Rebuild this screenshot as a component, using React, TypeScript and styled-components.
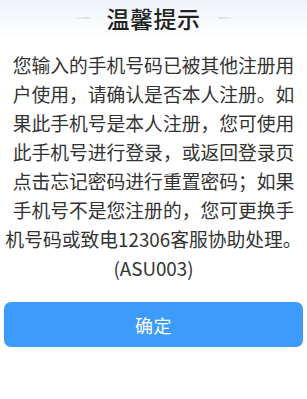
import React from "react";
import styled, { createGlobalStyle } from "styled-components";

const GlobalStyle = createGlobalStyle`
  html, body {
    margin: 0;
    padding: 0;
    background: #ffffff;
  }
  body {
    font-family: "Noto Sans CJK SC", "Noto Sans", sans-serif;
  }
`;

const Dialog = styled.div`
  width: 307px;
  height: 399px;
  box-sizing: border-box;
  background: linear-gradient(180deg, #edf2f9 0px, #f8fafd 22px, #ffffff 40px);
  display: flex;
  flex-direction: column;
`;

const Header = styled.div`
  height: 36px;
  display: flex;
  align-items: center;
  justify-content: center;
  gap: 17px;
`;

const Dash = styled.span<{ $flip?: boolean }>`
  width: 16px;
  height: 2px;
  border-radius: 1px;
  background: linear-gradient(
    ${(p) => (p.$flip ? "270deg" : "90deg")},
    rgba(214, 223, 236, 0.2),
    #d3deec
  );
`;

const Title = styled.h1`
  margin: 0;
  font-size: 23px;
  font-weight: 500;
  color: #222222;
  letter-spacing: 0.5px;
  line-height: 36px;
`;

const Message = styled.p`
  margin: 14px 0 0;
  padding: 0 5px;
  font-size: 18.8px;
  line-height: 29px;
  color: #333333;
  text-align: center;
`;

const ConfirmButton = styled.button`
  margin: 20px 4px 0;
  height: 45px;
  border: none;
  border-radius: 7px;
  background: #3d9bfb;
  color: #ffffff;
  font-family: inherit;
  font-size: 18px;
  letter-spacing: 0.5px;
`;

const App: React.FC = () => {
  return (
    <>
      <GlobalStyle />
      <Dialog>
        <Header>
          <Dash />
          <Title>温馨提示</Title>
          <Dash $flip />
        </Header>
        <Message>
          您输入的手机号码已被其他注册用户使用，请确认是否本人注册。如果此手机号是本人注册，您可使用此手机号进行登录，或返回登录页点击忘记密码进行重置密码；如果手机号不是您注册的，您可更换手机号码或致电12306客服协助处理。(ASU003)
        </Message>
        <ConfirmButton>确定</ConfirmButton>
      </Dialog>
    </>
  );
};

export default App;
